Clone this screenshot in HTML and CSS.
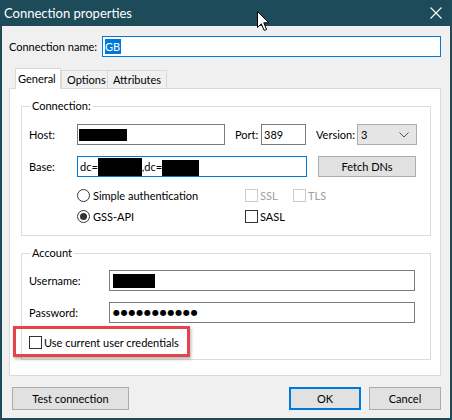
FILE: index.html
```html
<!DOCTYPE html>
<html>
<head>
<meta charset="utf-8">
<title>Connection properties</title>
<link rel="stylesheet" href="styles.css">
</head>
<body>
<div class="window">
  <div class="titlebar">
    <span class="title">Connection properties</span>
    <svg class="close" width="12" height="12" viewBox="0 0 12 12"><path d="M0.5 0.5 L11.5 11.5 M11.5 0.5 L0.5 11.5" stroke="#fff" stroke-width="1.1" fill="none"/></svg>
  </div>
  <div class="frame">
    <div class="name-row">
      <span class="name-label">Connection name:</span>
      <div class="input focus name-input"><span class="sel">GB</span></div>
    </div>
    <div class="tabs">
      <div class="tab active">General</div>
      <div class="tab t-options">Options</div>
      <div class="tab t-attr">Attributes</div>
    </div>
    <div class="panel">
      <div class="group g-conn">
        <span class="legend">Connection:</span>
        <div class="row">
          <span class="lbl l-host">Host:</span>
          <div class="input host"><span class="redact r-host"></span></div>
          <span class="lbl l-port">Port:</span>
          <div class="input port">389</div>
          <span class="lbl l-ver">Version:</span>
          <div class="select"><span>3</span><svg width="10" height="6" viewBox="0 0 10 6"><path d="M0.5 0.5 L5 5 L9.5 0.5" stroke="#555" fill="none"/></svg></div>
        </div>
        <div class="row row2">
          <span class="lbl l-host">Base:</span>
          <div class="input focus base">dc=<span class="redact r-base1"></span>,dc=<span class="redact r-base2"></span></div>
          <button class="btn fetch">Fetch DNs</button>
        </div>
        <div class="opts">
          <div class="opt"><span class="radio"></span>Simple authentication</div>
          <div class="opt">
            <span class="chk-item disabled"><span class="check"></span>SSL</span>
            <span class="chk-item disabled"><span class="check"></span>TLS</span>
          </div>
          <div class="opt"><span class="radio on"></span>GSS-API</div>
          <div class="opt"><span class="chk-item"><span class="check"></span>SASL</span></div>
        </div>
      </div>
      <div class="group g-acct">
        <span class="legend">Account</span>
        <div class="row">
          <span class="lbl l-user">Username:</span>
          <div class="input user"><span class="redact r-user"></span></div>
        </div>
        <div class="row row2">
          <span class="lbl l-user">Password:</span>
          <div class="input user pass">●●●●●●●●●●●</div>
        </div>
        <div class="row cred-row">
          <span class="check"></span>Use current user credentials
          <span class="highlight"></span>
        </div>
      </div>
    </div>
    <div class="buttons">
      <button class="btn test">Test connection</button>
      <span class="spacer"></span>
      <button class="btn ok">OK</button>
      <button class="btn cancel">Cancel</button>
    </div>
  </div>
  <svg class="cursor" width="13" height="21" viewBox="0 0 13 21"><path d="M0.5 0.5 L0.5 16.5 L4.3 12.8 L7.2 19.5 L9.6 18.5 L6.8 11.8 L11.8 11.8 Z" fill="#fff" stroke="#000" stroke-width="1" stroke-linejoin="miter"/></svg>
</div>
</body>
</html>
```
FILE: styles.css
```css
* { box-sizing: border-box; }
html, body { margin: 0; padding: 0; }
body {
  width: 452px;
  height: 420px;
  overflow: hidden;
  background: #f0f0f0;
  font-family: Lato, "Noto Sans", sans-serif;
  font-size: 11px;
  color: #000;
}
.window {
  width: 452px;
  height: 420px;
  display: flex;
  flex-direction: column;
  position: relative;
}
.titlebar {
  height: 26px;
  flex: none;
  background: #1d4b59;
  color: #fff;
  display: flex;
  align-items: center;
  justify-content: space-between;
  padding: 0 10px 0 4px;
}
.title { font-size: 13px; }
.frame {
  flex: 1;
  border: 2px solid #1d4b59;
  border-top: 0;
  background: #f0f0f0;
  display: flex;
  flex-direction: column;
}
.name-row {
  display: flex;
  align-items: center;
  margin: 10px 9px 0 7px;
}
.name-label { width: 93px; flex: none; }
.input {
  height: 21px;
  background: #fff;
  border: 1px solid #7a7a7a;
  display: flex;
  align-items: center;
  padding-left: 2px;
  flex: none;
  white-space: nowrap;
}
.input.focus { border-color: #0078d7; }
.name-input { flex: 1; }
.sel {
  background: #0078d7;
  color: #fff;
  line-height: 15px;
  padding: 0 1px 0 0;
}
.tabs {
  display: flex;
  align-items: flex-end;
  height: 20px;
  margin: 11px 0 0 13px;
}
.tab {
  height: 18px;
  border: 1px solid #d9d9d9;
  border-bottom: 0;
  background: #f0f0f0;
  display: flex;
  align-items: center;
  padding-left: 5px;
}
.tab.active {
  height: 21px;
  width: 46px;
  margin-bottom: -1px;
  background: #fff;
  position: relative;
  z-index: 1;
  padding-left: 2px;
  padding-bottom: 2px;
}
.t-options { width: 47px; }
.t-attr { width: 60px; margin-left: -1px; }
.panel {
  margin-left: 7px;
  width: 432px;
  height: 288px;
  background: #fff;
  border: 1px solid #d9d9d9;
  padding-left: 11px;
  display: flex;
  flex-direction: column;
  flex: none;
}
.group {
  width: 410px;
  border: 1px solid #dcdcdc;
  position: relative;
  padding-left: 7px;
  flex: none;
}
.g-conn { margin-top: 17px; height: 130px; padding-top: 17px; }
.g-acct { margin-top: 17px; height: 107px; padding-top: 16px; }
.legend {
  position: absolute;
  top: -9px;
  left: 8px;
  line-height: 16px;
  padding: 0 2px;
  background: #fff;
}
.row {
  display: flex;
  align-items: center;
  height: 21px;
}
.row2 { margin-top: 11px; }
.lbl { flex: none; }
.l-host { width: 48px; }
.host { width: 148px; }
.l-port { width: 26px; margin-left: 10px; }
.port { width: 45px; }
.l-ver { width: 41px; margin-left: 10px; }
.select {
  width: 60px;
  height: 21px;
  background: #e5e5e5;
  border: 1px solid #acacac;
  display: flex;
  align-items: center;
  justify-content: space-between;
  padding: 0 7px 0 3px;
}
.base { width: 230px; }
.redact { display: inline-block; background: #000; }
.r-host { width: 48px; height: 12px; margin-left: -1px; }
.r-base1 { width: 44px; height: 18px; }
.r-base2 { width: 37px; height: 16px; margin-top: 2px; }
.r-user { width: 42px; height: 14px; margin-left: 1px; }
.btn {
  font: inherit;
  color: #000;
  background: #e1e1e1;
  border: 1px solid #adadad;
  padding: 0;
  margin: 0;
  flex: none;
}
.fetch { width: 98px; height: 21px; margin-left: 11px; }
.opts {
  display: grid;
  grid-template-columns: 168px auto;
  grid-auto-rows: 21px;
  margin-top: 8px;
  padding-left: 48px;
}
.opt { display: flex; align-items: center; }
.radio {
  width: 13px;
  height: 13px;
  border: 1px solid #333;
  border-radius: 50%;
  background: #fff;
  margin-right: 3px;
  flex: none;
  display: flex;
  align-items: center;
  justify-content: center;
}
.radio.on::after {
  content: "";
  width: 7px;
  height: 7px;
  border-radius: 50%;
  background: #333;
}
.check {
  width: 13px;
  height: 13px;
  border: 1px solid #333;
  background: #fff;
  margin-right: 2px;
  flex: none;
}
.chk-item { display: flex; align-items: center; }
.chk-item.disabled { color: #a0a0a0; width: 48px; }
.chk-item.disabled .check { border-color: #cccccc; }
.l-user { width: 80px; }
.user { width: 306px; }
.pass {
  font-family: "DejaVu Sans", sans-serif;
  font-size: 8px;
  letter-spacing: 0.8px;
  padding-left: 3px;
}
.cred-row { margin-top: 9px; position: relative; }
.highlight {
  position: absolute;
  left: -16px;
  top: -6px;
  width: 177px;
  height: 31px;
  border: 3px solid #e5444c;
  box-shadow: 1px 2px 3px rgba(0, 0, 0, 0.3);
}
.buttons {
  display: flex;
  margin: 11px 9px 0 10px;
  height: 23px;
}
.test { width: 117px; height: 23px; }
.spacer { flex: 1; }
.ok { width: 72px; height: 23px; border: 2px solid #0078d7; }
.cancel { width: 72px; height: 23px; margin-left: 8px; }
.cursor { position: absolute; left: 257px; top: 11px; }
```
